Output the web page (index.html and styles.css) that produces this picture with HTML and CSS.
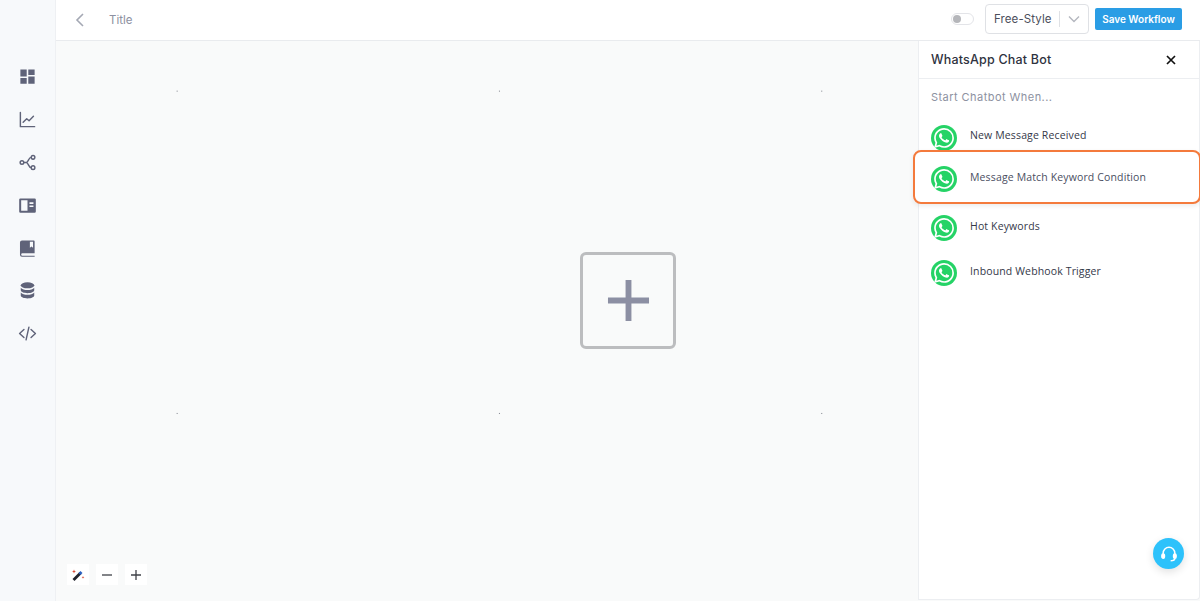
FILE: index.html
```html
<!DOCTYPE html>
<html lang="en">
<head>
    <meta charset="UTF-8">
    <title>WhatsApp Chat Bot Workflow</title>
    <link rel="stylesheet" href="styles.css">
</head>
<body>
    <svg class="sprite" width="0" height="0">
        <symbol id="wa" viewBox="0 0 24 24">
            <path d="M17.472 14.382c-.297-.149-1.758-.867-2.03-.967-.273-.099-.471-.148-.67.15-.197.297-.767.966-.94 1.164-.173.199-.347.223-.644.075-.297-.15-1.255-.463-2.39-1.475-.883-.788-1.48-1.761-1.653-2.059-.173-.297-.018-.458.13-.606.134-.133.298-.347.446-.52.149-.174.198-.298.298-.497.099-.198.05-.371-.025-.52-.075-.149-.669-1.612-.916-2.207-.242-.579-.487-.5-.669-.51-.173-.008-.371-.01-.57-.01-.198 0-.52.074-.792.372-.272.297-1.04 1.016-1.04 2.479 0 1.462 1.065 2.875 1.213 3.074.149.198 2.096 3.2 5.077 4.487.709.306 1.262.489 1.694.625.712.227 1.36.195 1.871.118.571-.085 1.758-.719 2.006-1.413.248-.694.248-1.289.173-1.413-.074-.124-.272-.198-.57-.347m-5.421 7.403h-.004a9.87 9.87 0 01-5.031-1.378l-.361-.214-3.741.982.998-3.648-.235-.374a9.86 9.86 0 01-1.51-5.26c.001-5.45 4.436-9.884 9.888-9.884 2.64 0 5.122 1.03 6.988 2.898a9.825 9.825 0 012.893 6.994c-.003 5.45-4.437 9.884-9.885 9.884m8.413-18.297A11.815 11.815 0 0012.05 0C5.495 0 .16 5.335.157 11.892c0 2.096.547 4.142 1.588 5.945L.057 24l6.305-1.654a11.882 11.882 0 005.683 1.448h.005c6.554 0 11.89-5.335 11.893-11.893a11.821 11.821 0 00-3.48-8.413z"/>
        </symbol>
    </svg>

    <aside class="sidebar">
        <div class="logo-blank"></div>
        <nav class="side-nav">
            <a class="side-link">
                <svg viewBox="0 0 24 24" width="19" height="19"><path d="M3 12h8V3H3zm0 9h8v-7H3zm10 0h8v-9h-8zm0-18v7h8V3z"/></svg>
            </a>
            <a class="side-link">
                <svg viewBox="0 0 24 24" width="19" height="19" class="line"><path d="M3 3v18h18"/><path d="M6.500 15.500l4.500-4.500 3 2.500 5.500-5.500"/></svg>
            </a>
            <a class="side-link">
                <svg viewBox="0 0 24 24" width="19" height="19" class="line"><circle cx="5" cy="12" r="2.300"/><circle cx="19" cy="5.500" r="2.300"/><circle cx="19" cy="18.500" r="2.300"/><path d="M7.300 12h3.200M16.700 5.500c-3.500 0-3.500 6.500-6.200 6.500 2.700 0 2.700 6.500 6.200 6.500"/></svg>
            </a>
            <a class="side-link">
                <svg viewBox="0 0 24 24" width="19" height="19"><path fill-rule="evenodd" d="M3 3h18a1.500 1.500 0 011.500 1.500v15A1.500 1.500 0 0121 21H3a1.500 1.500 0 01-1.500-1.500v-15A1.500 1.500 0 013 3zm1 2.500v13h8v-13zm10.500 2.500v2h5V8zm0 4v2h5v-2z"/></svg>
            </a>
            <a class="side-link">
                <svg viewBox="0 0 24 24" width="19" height="19"><path fill-rule="evenodd" d="M5 2h15a1 1 0 011 1v15H5.500a1.500 1.500 0 000 3H21v1.500H5A2.500 2.500 0 012.500 20V4.500A2.500 2.500 0 015 2zm10 1.500V11l2-1.500 2 1.500V3.500z"/></svg>
            </a>
            <a class="side-link">
                <svg viewBox="0 0 24 24" width="19" height="19"><ellipse cx="12" cy="5.500" rx="8.500" ry="3.800"/><path d="M3.500 8.500c1.500 2 5 2.900 8.500 2.900s7-.9 8.500-2.900v3.300c0 2-3.800 3.700-8.500 3.700s-8.500-1.700-8.500-3.700z"/><path d="M3.500 14.500c1.500 2 5 2.900 8.500 2.900s7-.9 8.500-2.900v3.800c0 2-3.800 3.700-8.500 3.700s-8.500-1.700-8.500-3.700z"/></svg>
            </a>
            <a class="side-link">
                <svg viewBox="0 0 24 24" width="19" height="19" class="line"><path d="M7.500 7L2 12l5.500 5M16.500 7l5.500 5-5.500 5M13.800 4l-3.600 16"/></svg>
            </a>
        </nav>
    </aside>

    <div class="main">
        <header class="topbar">
            <div class="topbar-left">
                <svg class="back-icon" viewBox="0 0 12 16" width="12" height="16"><path d="M9 2L3 8l6 6"/></svg>
                <span class="title">Title</span>
            </div>
            <div class="topbar-right">
                <span class="toggle"><span class="toggle-knob"></span></span>
                <div class="mode-select">
                    <span class="mode-value">Free-Style</span>
                    <span class="mode-arrow">
                        <svg viewBox="0 0 12 8" width="12" height="8"><path d="M1 1.500l5 5 5-5"/></svg>
                    </span>
                </div>
                <button class="save-btn">Save Workflow</button>
            </div>
        </header>

        <div class="workspace">
            <section class="canvas">
                <button class="add-node">
                    <svg viewBox="0 0 44 44" width="43" height="43"><path d="M19 1h6v18h18v6H25v18h-6V25H1v-6h18z"/></svg>
                </button>
                <div class="zoom-tools">
                    <button class="zoom-btn">
                        <svg viewBox="0 0 14 14" width="14" height="14"><path class="wand-dark" d="M1.500 11l7-7 2 2-7 7z"/><path class="wand-blue" d="M7.500 5l2-2 2 2-2 2z"/><path class="wand-red" d="M3 1.500l.6 1.400 1.400.6-1.400.6L3 5.500l-.6-1.400L1 3.500l1.400-.6zM12 8l.4 1 1 .4-1 .4-.4 1-.4-1-1-.4 1-.4z"/></svg>
                    </button>
                    <button class="zoom-btn">
                        <svg viewBox="0 0 12 12" width="12" height="12"><path d="M1 6h10"/></svg>
                    </button>
                    <button class="zoom-btn">
                        <svg viewBox="0 0 12 12" width="12" height="12"><path d="M1 6h10M6 1v10"/></svg>
                    </button>
                </div>
            </section>

            <aside class="panel">
                <div class="panel-head">
                    <h2>WhatsApp Chat Bot</h2>
                    <svg class="close-icon" viewBox="0 0 10 10" width="10" height="10"><path d="M1 1l8 8M9 1l-8 8"/></svg>
                </div>
                <p class="panel-label">Start Chatbot When...</p>
                <ul class="trigger-list">
                    <li class="trigger first">
                        <span class="wa-badge"><svg viewBox="0 0 24 24" width="20" height="20"><use href="#wa"/></svg></span>
                        <span class="trigger-name">New Message Received</span>
                    </li>
                    <li class="trigger selected">
                        <span class="wa-badge"><svg viewBox="0 0 24 24" width="20" height="20"><use href="#wa"/></svg></span>
                        <span class="trigger-name">Message Match Keyword Condition</span>
                    </li>
                    <li class="trigger">
                        <span class="wa-badge"><svg viewBox="0 0 24 24" width="20" height="20"><use href="#wa"/></svg></span>
                        <span class="trigger-name">Hot Keywords</span>
                    </li>
                    <li class="trigger">
                        <span class="wa-badge"><svg viewBox="0 0 24 24" width="20" height="20"><use href="#wa"/></svg></span>
                        <span class="trigger-name">Inbound Webhook Trigger</span>
                    </li>
                </ul>
                <button class="help-btn">
                    <svg viewBox="0 0 24 24" width="20" height="20"><path d="M5 14v-3a7 7 0 0114 0v3"/><rect x="3.500" y="12" width="3" height="5" rx="1.500"/><rect x="17.500" y="12" width="3" height="5" rx="1.500"/><path d="M19 17c0 2-2 3-5 3"/></svg>
                </button>
            </aside>
        </div>
    </div>
</body>
</html>
```

FILE: styles.css
```css
* {
    box-sizing: border-box;
}
html, body {
    height: 100%;
}
body {
    margin: 0;
    display: flex;
    overflow: hidden;
    font-family: "Open Sans", sans-serif;
    background-color: #f9fafa;
    color: #343a4c;
}
button {
    font-family: inherit;
    border: none;
    padding: 0;
    cursor: pointer;
}
.sprite {
    position: absolute;
}

/* left nav */
.sidebar {
    width: 56px;
    flex-shrink: 0;
    background-color: #f7f9fb;
    border-right: 1px solid #eef0f3;
}
.logo-blank {
    height: 55px;
}
.side-nav {
    display: flex;
    flex-direction: column;
}
.side-link {
    height: 42.900px;
    display: flex;
    align-items: center;
    justify-content: center;
}
.side-link svg {
    fill: #5f6379;
}
.side-link svg.line {
    fill: none;
    stroke: #5f6379;
    stroke-width: 1.8;
    stroke-linecap: round;
    stroke-linejoin: round;
}

.main {
    flex: 1;
    min-width: 0;
    display: flex;
    flex-direction: column;
}

/* top bar */
.topbar {
    height: 41px;
    flex-shrink: 0;
    display: flex;
    align-items: center;
    justify-content: space-between;
    background-color: #fff;
    border-bottom: 1px solid #e9ebee;
    padding: 0 18px 1px 18px;
}
.topbar-left {
    display: flex;
    align-items: center;
    gap: 23px;
}
.back-icon {
    fill: none;
    stroke: #a4a8b4;
    stroke-width: 1.6;
}
.title {
    font-family: "Inter", sans-serif;
    font-size: 11.500px;
    color: #8d91a1;
}
.topbar-right {
    display: flex;
    align-items: center;
    margin-top: -1px;
}
.toggle {
    width: 23px;
    height: 12px;
    margin-right: 11px;
    border: 1px solid #e3e4e8;
    border-radius: 6px;
    background-color: #fff;
    display: flex;
    align-items: center;
    padding-left: 1px;
}
.toggle-knob {
    width: 8px;
    height: 8px;
    border-radius: 50%;
    background-color: #b5b6ba;
}
.mode-select {
    width: 104px;
    height: 30px;
    display: flex;
    align-items: center;
    border: 1px solid #dfe1e5;
    border-radius: 4px;
    background-color: #fff;
    margin-right: 6px;
    padding: 0 0 0 8px;
}
.mode-value {
    flex: 1;
    font-family: "Inter", sans-serif;
    font-size: 11.500px;
    letter-spacing: 0.100px;
    color: #4c4f5c;
}
.mode-arrow {
    width: 29px;
    height: 16px;
    border-left: 1px solid #dfe1e5;
    display: flex;
    align-items: center;
    justify-content: center;
}
.mode-arrow svg {
    fill: none;
    stroke: #b4b7bf;
    stroke-width: 1.4;
}
.save-btn {
    width: 87px;
    height: 22px;
    background-color: #2a9de5;
    color: #fff;
    border-radius: 2px;
    font-family: "Inter", sans-serif;
    font-size: 10px;
    font-weight: 600;
}

.workspace {
    flex: 1;
    min-height: 0;
    display: flex;
}

/* canvas */
.canvas {
    position: relative;
    flex: 1;
    background-color: #f9fafa;
    background-image: radial-gradient(circle, #80838c 0.7px, transparent 1px);
    background-size: 322.300px 322.300px;
    background-position: -40px -111px;
}
.add-node {
    position: absolute;
    left: 524px;
    top: 211px;
    width: 96px;
    height: 97px;
    display: flex;
    align-items: center;
    justify-content: center;
    background-color: transparent;
    border: 3px solid #bcbdbf;
    border-radius: 6px;
}
.add-node svg {
    fill: #8c8fa3;
}
.zoom-tools {
    position: absolute;
    left: 11px;
    bottom: 16px;
    display: flex;
    gap: 7px;
}
.zoom-btn {
    width: 22px;
    height: 21px;
    background-color: #fff;
    display: flex;
    align-items: center;
    justify-content: center;
}
.zoom-btn svg {
    fill: none;
    stroke: #3f4148;
    stroke-width: 1.300;
}
.zoom-btn svg .wand-dark {
    fill: #20222c;
    stroke: none;
}
.zoom-btn svg .wand-blue {
    fill: #2b5fc0;
    stroke: none;
}
.zoom-btn svg .wand-red {
    fill: #d8452f;
    stroke: none;
}

/* right panel */
.panel {
    position: relative;
    width: 282px;
    flex-shrink: 0;
    margin-bottom: 1px;
    background-color: #fff;
    border-left: 1px solid #eceef1;
    border-right: 1px solid #eceef1;
    border-bottom: 1px solid #eceef1;
    border-bottom-right-radius: 4px;
}
.panel-head {
    height: 38px;
    display: flex;
    align-items: center;
    justify-content: space-between;
    padding: 0 23px 0 12px;
    border-bottom: 1px solid #eceef1;
}
.panel-head h2 {
    margin: 0;
    font-family: "Inter", sans-serif;
    font-size: 12.500px;
    font-weight: 500;
    letter-spacing: 0.200px;
    color: #2f3240;
}
.close-icon {
    fill: none;
    stroke: #111;
    stroke-width: 1.700;
}
.panel-label {
    margin: 0;
    padding: 11px 12px 0;
    height: 32px;
    font-family: "Inter", sans-serif;
    font-size: 11px;
    letter-spacing: 0.450px;
    color: #8d91a1;
}
.trigger-list {
    list-style: none;
    margin: 0;
    padding: 0;
}
.trigger {
    display: flex;
    align-items: center;
    height: 45px;
    padding-left: 12px;
}
.trigger.first {
    height: 47px;
    padding-top: 6px;
    margin-bottom: -8px;
}
.trigger.selected {
    position: relative;
    height: 54px;
    margin-left: -6px;
    margin-right: -2px;
    margin-bottom: 1px;
    padding-top: 3px;
    padding-left: 16px;
    background-color: #fff;
    border: 2px solid #f47a3c;
    border-radius: 8px;
    box-shadow: 0 2px 5px rgba(0, 0, 0, 0.08);
}
.wa-badge {
    width: 26px;
    height: 26px;
    flex-shrink: 0;
    display: flex;
    align-items: center;
    justify-content: center;
    background-color: #25d366;
    border-radius: 50%;
}
.wa-badge svg {
    fill: #fff;
}
.trigger-name {
    position: relative;
    top: -2px;
    margin-left: 13px;
    font-size: 10.500px;
    font-weight: 500;
    letter-spacing: 0.140px;
    color: #343849;
}
.trigger.first .trigger-name {
    top: -3px;
}
.trigger.selected .trigger-name {
    color: #4a4e5f;
}
.help-btn {
    position: absolute;
    right: 15px;
    bottom: 30px;
    width: 31px;
    height: 31px;
    display: flex;
    align-items: center;
    justify-content: center;
    border-radius: 50%;
    background-color: #2dc2fb;
    box-shadow: 0 3px 8px rgba(0, 0, 0, 0.12);
}
.help-btn svg {
    fill: #fff;
    stroke: #fff;
    stroke-width: 1.800;
}
.help-btn svg path {
    fill: none;
}
```
